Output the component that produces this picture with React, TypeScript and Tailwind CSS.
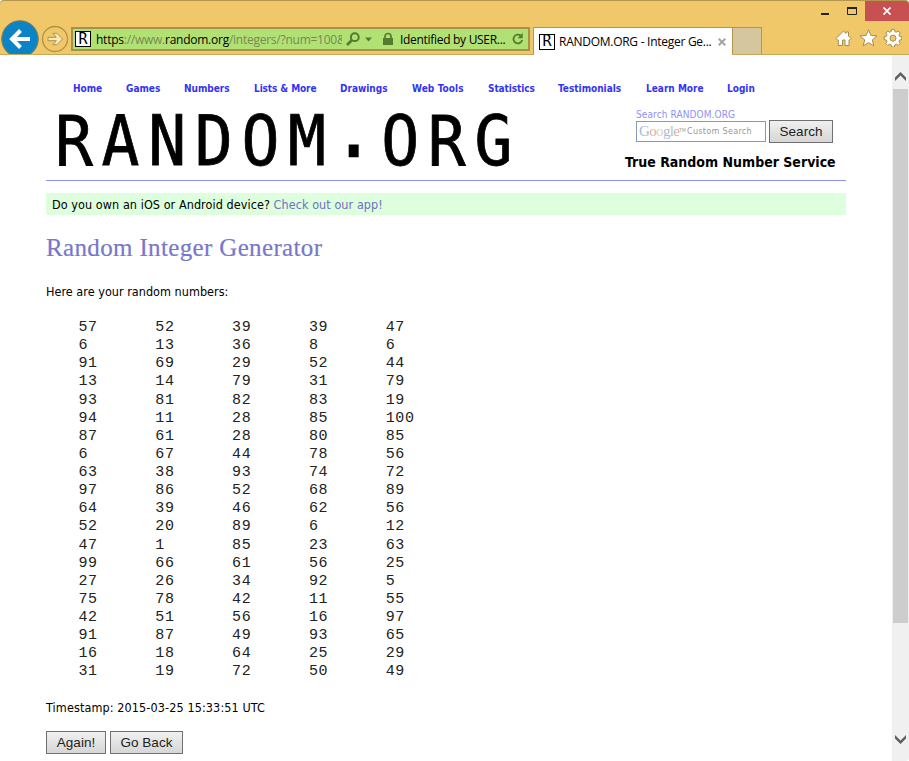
import React from 'react';

const navItems = [
  { label: 'Home', width: 'w-[29px]' },
  { label: 'Games', width: 'w-[34px]' },
  { label: 'Numbers', width: 'w-[46px]' },
  { label: 'Lists & More', width: 'w-[62px] tracking-[-0.1px]' },
  { label: 'Drawings', width: 'w-[48px]' },
  { label: 'Web Tools', width: 'w-[52px] tracking-[0.1px]' },
  { label: 'Statistics', width: 'w-[46px] tracking-[-0.1px]' },
  { label: 'Testimonials', width: 'w-[64px]' },
  { label: 'Learn More', width: 'w-[57px]' },
  { label: 'Login', width: 'w-[28px]' },
];

const numbers = [
  [57, 52, 39, 39, 47],
  [6, 13, 36, 8, 6],
  [91, 69, 29, 52, 44],
  [13, 14, 79, 31, 79],
  [93, 81, 82, 83, 19],
  [94, 11, 28, 85, 100],
  [87, 61, 28, 80, 85],
  [6, 67, 44, 78, 56],
  [63, 38, 93, 74, 72],
  [97, 86, 52, 68, 89],
  [64, 39, 46, 62, 56],
  [52, 20, 89, 6, 12],
  [47, 1, 85, 23, 63],
  [99, 66, 61, 56, 25],
  [27, 26, 34, 92, 5],
  [75, 78, 42, 11, 55],
  [42, 51, 56, 16, 97],
  [91, 87, 49, 93, 65],
  [16, 18, 64, 25, 29],
  [31, 19, 72, 50, 49],
];

function Favicon() {
  return (
    <span className="flex h-4 w-4 shrink-0 items-center justify-center border border-black bg-white font-['DejaVu_Sans_Mono',monospace] text-[15px] leading-none tracking-normal text-black">
      R
    </span>
  );
}

function GrayButton({ children, className }: { children: React.ReactNode; className: string }) {
  return (
    <button
      className={`h-[23px] border border-[#707070] bg-linear-to-b from-[#f0f0f0] to-[#d6d6d6] font-['Liberation_Sans',Arial,sans-serif] leading-[21px] whitespace-nowrap text-[#222] ${className}`}
    >
      {children}
    </button>
  );
}

function NavigationButtons() {
  return (
    <div className="flex h-[54px] w-[71px] items-end overflow-hidden">
      <svg className="h-[36px] w-[71px]" viewBox="0 18 71 36">
        <circle cx="20" cy="39" r="18.3" fill="#0a84c6" stroke="#8f7a45" strokeWidth="1" />
        <path d="M30 39H13M20.5 30.5L12 39L20.5 47.5" fill="none" stroke="#fff" strokeWidth="4" />
        <circle cx="55" cy="39" r="12.5" fill="#f0c869" stroke="#b08f49" strokeWidth="1.3" />
        <path d="M48 37.3h8.3l-3.4-4h4l5.6 5.7-5.6 5.7h-4l3.4-4H48z" fill="#fbe9c0" stroke="#b08f49" strokeWidth="1" />
      </svg>
    </div>
  );
}

function AddressBar() {
  return (
    <div className="mt-[27px] flex h-6 w-[459px] items-center border-2 border-[#a5924c] bg-[#b2e173] pl-[2px] font-['Open_Sans','Noto_Sans',sans-serif] text-[12px] whitespace-nowrap text-black">
      <Favicon />
      <div className="ml-[5px] h-4 w-[246px] overflow-hidden leading-[18px] tracking-[-0.25px] text-[#758a55]">
        <span className="text-black">https</span>://www.<span className="text-black">random.org</span>/integers/?num=100&amp;
      </div>
      <svg className="ml-[4px] h-4 w-[30px] shrink-0" viewBox="0 0 30 16">
        <circle cx="8.8" cy="6.2" r="3.9" fill="none" stroke="#567a2f" strokeWidth="2" />
        <path d="M6 9L1 14" stroke="#567a2f" strokeWidth="2.6" />
        <path d="M19 6.5h7l-3.5 4z" fill="#567a2f" />
      </svg>
      <svg className="ml-[6px] h-4 w-3 shrink-0" viewBox="0 0 12 16">
        <path d="M3 8V5.5a3 3 0 0 1 6 0V8" fill="none" stroke="#567a2f" strokeWidth="1.7" />
        <rect x="1" y="7" width="10" height="7" fill="#567a2f" />
      </svg>
      <span className="ml-[6px] h-4 w-[107px] leading-[18px] tracking-[-0.3px]">Identified by USER...</span>
      <svg className="ml-[5px] h-4 w-3 shrink-0" viewBox="0 0 12 16">
        <path d="M8.6 4.5A4.4 4.4 0 1 0 10.2 8.9" fill="none" stroke="#567a2f" strokeWidth="1.8" />
        <path d="M10.7 1.8v5.4H5.6z" fill="#567a2f" />
      </svg>
    </div>
  );
}

function Tabs() {
  return (
    <div className="mt-[27px] ml-[3px] flex h-7">
      <div className="flex h-7 w-[199px] items-center border-t border-l border-[#b3964f] bg-white pl-[5px] font-['Open_Sans','Noto_Sans',sans-serif] text-[12px] text-black">
        <Favicon />
        <span className="ml-1 w-[157px] leading-4 whitespace-nowrap tracking-[-0.27px]">RANDOM.ORG - Integer Ge...</span>
        <svg className="ml-[2px] h-2 w-2 shrink-0" viewBox="0 0 8 8">
          <path d="M.7 .7L7.3 7.3M7.3 .7L.7 7.3" stroke="#a5a5a5" strokeWidth="2" />
        </svg>
      </div>
      <div className="h-[27px] w-[30px] border border-b-0 border-[#b3964f] bg-[#d6c69f]" />
    </div>
  );
}

function WindowControls() {
  return (
    <div className="ml-auto flex w-[93px] flex-col items-end">
      <div className="flex h-[21px] pt-px">
        <svg className="h-5 w-[45px]" viewBox="0 0 45 20">
          <path d="M1 13h8" stroke="#222" strokeWidth="2" />
          <path d="M27.5 7v6.5h9V7" fill="none" stroke="#222" />
          <path d="M27 7h10" stroke="#222" strokeWidth="2" />
        </svg>
        <div className="flex h-5 w-11 items-center justify-center rounded-tr bg-[#c75050]">
          <svg className="h-2 w-2" viewBox="0 0 8 8">
            <path d="M.5 .5L7.5 7.5M7.5 .5L.5 7.5" stroke="#fff" strokeWidth="1.7" />
          </svg>
        </div>
      </div>
      <svg className="mt-[8px] mr-[7px] h-[18px] w-[67px]" viewBox="0 0 67 18">
        <g fill="#fff" stroke="#a98b48" strokeWidth="1" strokeLinejoin="round">
          <path d="M1 9.5L8.5 2l2.5 2.4V3h2.5v4L16 9.5 14.5 11H14v5.5h-4V11H7.5v5.5H3.3V11H2.5z" />
          <path d="M33.5 .8l2.4 5.6 6.1.5-4.7 4 1.5 6-5.3-3.3-5.3 3.3 1.5-6-4.7-4 6.1-.5z" />
          <path
            d="M56.6 1.2h2.8l.5 2.2 1.4.6 1.9-1.2 2 2-1.2 1.9.6 1.4 2.2.5v2.8l-2.2.5-.6 1.4 1.2 1.9-2 2-1.9-1.2-1.4.6-.5 2.2h-2.8l-.5-2.2-1.4-.6-1.9 1.2-2-2 1.2-1.9-.6-1.4-2.2-.5v-2.8l2.2-.5.6-1.4-1.2-1.9 2-2 1.9 1.2 1.4-.6z"
            transform="translate(0 -.8)"
          />
          <circle cx="58" cy="9.2" r="3" fill="#f0c869" />
        </g>
      </svg>
    </div>
  );
}

function Scrollbar() {
  return (
    <div className="flex w-[17px] flex-col items-center rounded-br bg-[#f0f0f0]">
      <svg className="h-[34px] w-[17px] shrink-0" viewBox="0 0 17 34">
        <path d="M3 26v-3.5L8.5 17l5.5 5.5v3.5L8.5 20.5z" fill="#5f5f5f" />
      </svg>
      <div className="h-[534px] w-[15px] shrink-0 bg-[#cdcdcd]" />
      <div className="grow" />
      <svg className="h-[34px] w-[17px] shrink-0" viewBox="0 0 17 34">
        <path d="M3 8v3.5L8.5 17l5.5-5.5V8L8.5 13.5z" fill="#5f5f5f" />
      </svg>
    </div>
  );
}

function SiteHeader() {
  return (
    <header className="flex h-[85px] justify-between border-b border-[#9090f0]">
      <div className="mt-[10px] ml-[9px] w-[520px] origin-left scale-x-90 font-['DejaVu_Sans_Mono',monospace] text-[70px] leading-[70px] tracking-[9.64px] whitespace-nowrap text-black [-webkit-text-stroke:0.8px_black]">
        RANDOM<span className="inline-block -translate-y-[9px] [-webkit-text-stroke:2.5px_black]">.</span>ORG
      </div>
      <div className="flex w-[221px] flex-col pt-[13px]">
        <div className="ml-[11px] h-[11px] text-[10px] leading-3 tracking-[0.1px] whitespace-nowrap text-[#9090f5]">Search RANDOM.ORG</div>
        <div className="ml-[11px] flex gap-[3px]">
          <div className="mt-px flex h-[21px] w-[130px] items-center border border-[#7e9db9] bg-white pl-[2px] whitespace-nowrap">
            <span className="font-['Liberation_Serif',serif] text-[15px] leading-[19px] tracking-[-0.65px]">
              <span className="text-[#a9b8dc]">G</span>
              <span className="text-[#e3aaa6]">o</span>
              <span className="text-[#e2d59b]">o</span>
              <span className="text-[#a9b8dc]">g</span>
              <span className="text-[#a9cfab]">l</span>
              <span className="text-[#e3aaa6]">e</span>
            </span>
            <span className="h-3 text-[5px] leading-[8px] text-[#999]">TM</span>
            <span className="ml-[1px] text-[9px] leading-[19px] tracking-[0.28px] text-[#999]">Custom Search</span>
          </div>
          <GrayButton className="w-16 text-[13.5px]">Search</GrayButton>
        </div>
        <div className="mt-[9px] h-5 text-[14px] leading-5 font-bold whitespace-nowrap text-black">True Random Number Service</div>
      </div>
    </header>
  );
}

export default function App() {
  return (
    <div className="flex h-[761px] w-[909px] flex-col overflow-hidden bg-white font-['DejaVu_Sans_Condensed','DejaVu_Sans',sans-serif]">
      <div className="flex h-[55px] shrink-0 rounded-t border-b border-[#c9a75a] bg-[#f0c869] shadow-[inset_0_1px_0_#b3964f]">
        <NavigationButtons />
        <AddressBar />
        <Tabs />
        <WindowControls />
      </div>
      <div className="flex min-h-0 grow">
        <main className="grow pl-[46px] text-[12.5px] text-black">
          <div className="w-[800px]">
            <nav className="flex h-[41px] gap-x-6 pt-[26px] pl-[27px] text-[10px] leading-[15px] font-bold whitespace-nowrap text-[#3333f5]">
              {navItems.map((item) => (
                <a key={item.label} className={item.width}>{item.label}</a>
              ))}
            </nav>
            <SiteHeader />
            <div className="mt-3 h-[22px] bg-[#ddffdd] pl-[6px] leading-[23px] tracking-[0.07px] whitespace-nowrap">
              Do you own an iOS or Android device? <a className="text-[#7070c4]">Check out our app!</a>
            </div>
            <h1 className="mt-[17px] h-[30px] font-['Liberation_Serif',serif] text-[25px] leading-[31px] tracking-[0.35px] whitespace-nowrap text-[#7777cc] [-webkit-text-stroke:0.2px_#7777cc]">
              Random Integer Generator
            </h1>
            <p className="mt-[21px] h-[18px] leading-[18px] tracking-[0.03px]">Here are your random numbers:</p>
            <div className="mt-[18px] h-[362px] pl-[32.5px] font-['Liberation_Mono',monospace] text-[15px] leading-[18.125px] tracking-[0.6px] text-[#222]">
              {numbers.map((row, i) => (
                <div key={i} className="flex">
                  {row.map((n, j) => (
                    <span key={j} className="w-[76.8px]">{n}</span>
                  ))}
                </div>
              ))}
            </div>
            <p className="mt-[18px] h-[18px] leading-[18px] tracking-[0.11px]">Timestamp: 2015-03-25 15:33:51 UTC</p>
            <div className="mt-[14px] flex gap-1">
              <GrayButton className="w-[60px] text-[13.5px]">Again!</GrayButton>
              <GrayButton className="w-[73px] text-[13.5px]">Go Back</GrayButton>
            </div>
          </div>
        </main>
        <Scrollbar />
      </div>
    </div>
  );
}
